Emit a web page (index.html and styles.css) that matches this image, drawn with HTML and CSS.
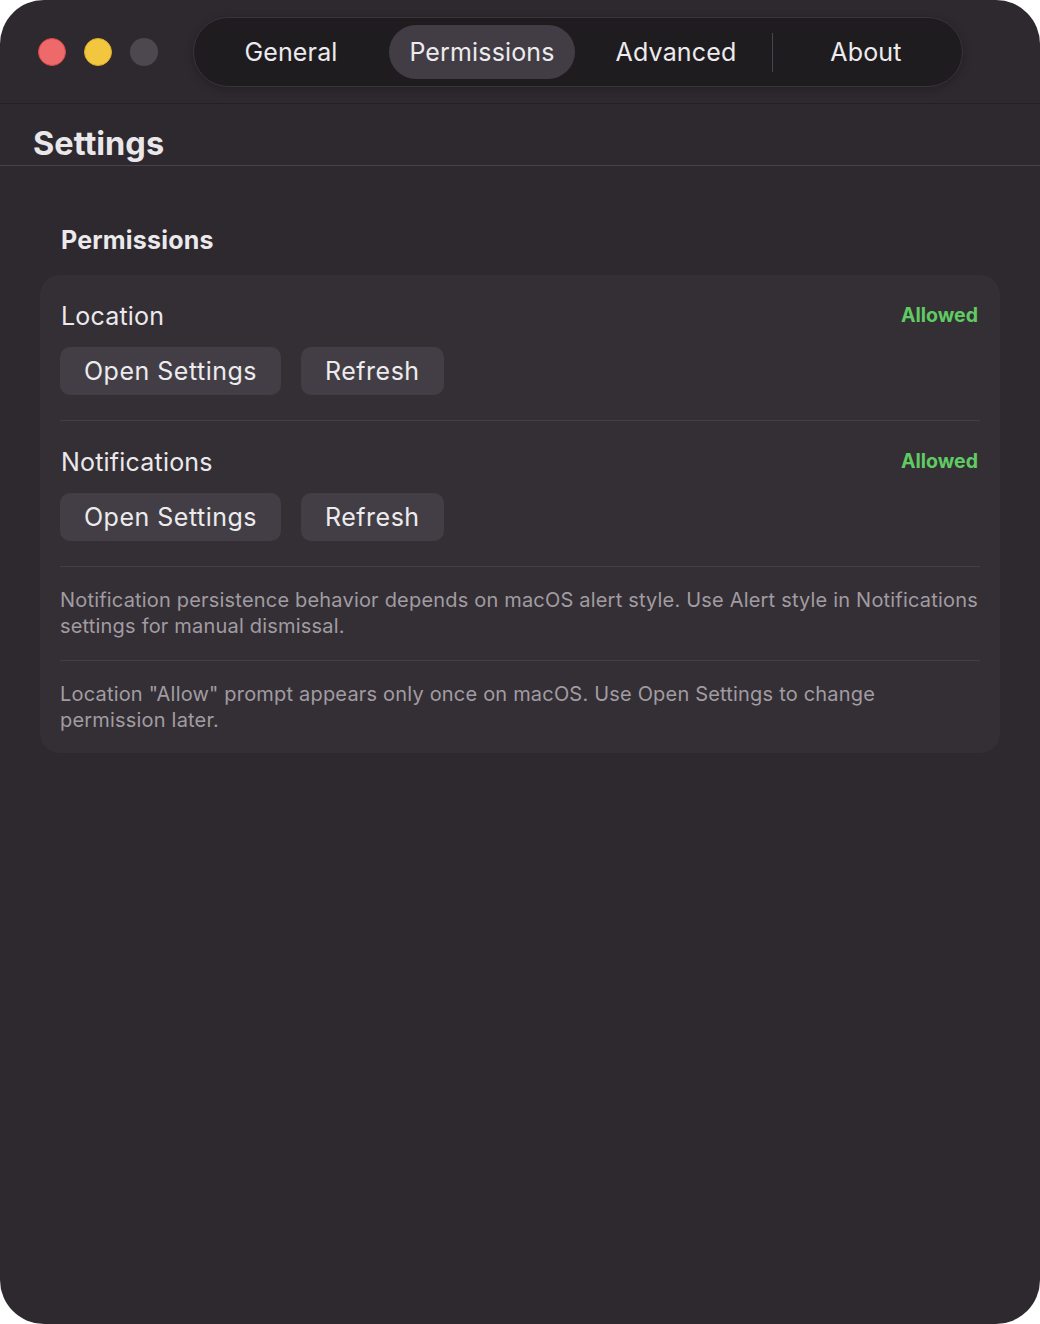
FILE: index.html
```html
<!DOCTYPE html>
<html>
<head>
<meta charset="utf-8">
<link rel="stylesheet" href="styles.css">
</head>
<body>
<div class="window">
  <header class="titlebar">
    <div class="lights">
      <span class="light red"></span>
      <span class="light yellow"></span>
      <span class="light gray"></span>
    </div>
    <nav class="tabs">
      <div class="tab w180">General</div>
      <div class="tab w186 active">Permissions</div>
      <div class="tab w186">Advanced</div>
      <div class="tab-sep"></div>
      <div class="tab w180">About</div>
    </nav>
  </header>
  <div class="page-title">Settings</div>
  <main class="content">
    <h2 class="section-title">Permissions</h2>
    <section class="card">
      <div class="perm">
        <div class="perm-head">
          <span class="perm-name">Location</span>
          <span class="status">Allowed</span>
        </div>
        <div class="buttons">
          <button class="btn">Open Settings</button>
          <button class="btn">Refresh</button>
        </div>
      </div>
      <div class="perm">
        <div class="perm-head">
          <span class="perm-name">Notifications</span>
          <span class="status">Allowed</span>
        </div>
        <div class="buttons">
          <button class="btn">Open Settings</button>
          <button class="btn">Refresh</button>
        </div>
      </div>
      <p class="note">Notification persistence behavior depends on macOS alert style. Use Alert style in Notifications settings for manual dismissal.</p>
      <p class="note">Location "Allow" prompt appears only once on macOS. Use Open Settings to change permission later.</p>
    </section>
  </main>
</div>
</body>
</html>
```
FILE: styles.css
```css
html, body {
  margin: 0;
  padding: 0;
  background: #ffffff;
}
body {
  font-family: Inter, "Noto Sans", sans-serif;
  color: #e9e6ea;
}
.window {
  width: 1040px;
  height: 1324px;
  background: #2e292f;
  border-radius: 44px;
  overflow: hidden;
  box-sizing: border-box;
}
.titlebar {
  height: 103px;
  border-bottom: 1px solid #242026;
  display: flex;
  align-items: center;
  padding-left: 38px;
}
.lights {
  display: flex;
  gap: 18px;
}
.light {
  width: 28px;
  height: 28px;
  border-radius: 50%;
  box-sizing: border-box;
}
.light.red { background: #ee6a6a; border: 1px solid #d8474a; }
.light.yellow { background: #f3c63f; border: 1px solid #d9a92c; }
.light.gray { background: #4d484f; }
.tabs {
  margin-left: 35px;
  margin-top: 1px;
  height: 70px;
  width: 770px;
  box-sizing: border-box;
  border-radius: 35px;
  background: #1f1c20;
  border: 1px solid #3a353c;
  padding: 0 7px;
  display: flex;
  align-items: center;
  gap: 8px;
  box-shadow: 0 2px 8px rgba(0,0,0,0.25);
}
.tab {
  height: 54px;
  border-radius: 27px;
  display: flex;
  align-items: center;
  justify-content: center;
  font-size: 25px;
  letter-spacing: 0.15px;
  color: #ecebed;
  flex: none;
}
.w180 { width: 180px; }
.w186 { width: 186px; }
.tab.active { background: #423d44; }
.tab-sep {
  width: 1px;
  height: 39px;
  background: #4a454c;
  margin: 0 -5px;
  flex: none;
}
.page-title {
  height: 62px;
  border-bottom: 1px solid #48434a;
  box-sizing: border-box;
  padding: 20px 0 0 33px;
  font-size: 32.5px;
  font-weight: 700;
  line-height: 40px;
  color: #e9e7ea;
}
.content {
  padding: 0 40px;
}
.section-title {
  margin: 0;
  padding: 58px 0 19px 21px;
  font-size: 25px;
  letter-spacing: 0.2px;
  line-height: 32px;
  font-weight: 700;
  color: #ebe9ec;
}
.card {
  background: #342f35;
  border-radius: 20px;
  padding: 0 20px;
}
.perm {
  padding: 25px 0;
  border-bottom: 1px solid #443f46;
}
.perm-head {
  display: flex;
  justify-content: space-between;
  align-items: center;
  height: 32px;
  padding-left: 1px;
}
.perm-name {
  font-size: 25px;
  letter-spacing: 0.2px;
  color: #ebe9ec;
}
.status {
  font-size: 19.5px;
  font-weight: 700;
  color: #5fcb62;
  margin-top: -2px;
  padding-right: 2px;
}
.buttons {
  display: flex;
  gap: 20px;
  margin-top: 15px;
}
.btn {
  height: 48px;
  border: none;
  border-radius: 10px;
  background: #433e45;
  color: #ecebed;
  font-family: Inter, "Noto Sans", sans-serif;
  font-size: 25px;
  letter-spacing: 0.5px;
  padding: 0 24px;
}
.note {
  margin: 0;
  padding: 20px 0 21px 0;
  font-size: 20px;
  letter-spacing: 0.19px;
  line-height: 26px;
  color: #a19ca2;
  border-bottom: 1px solid #443f46;
}
.note:last-child {
  border-bottom: none;
  padding-bottom: 20px;
}
```
